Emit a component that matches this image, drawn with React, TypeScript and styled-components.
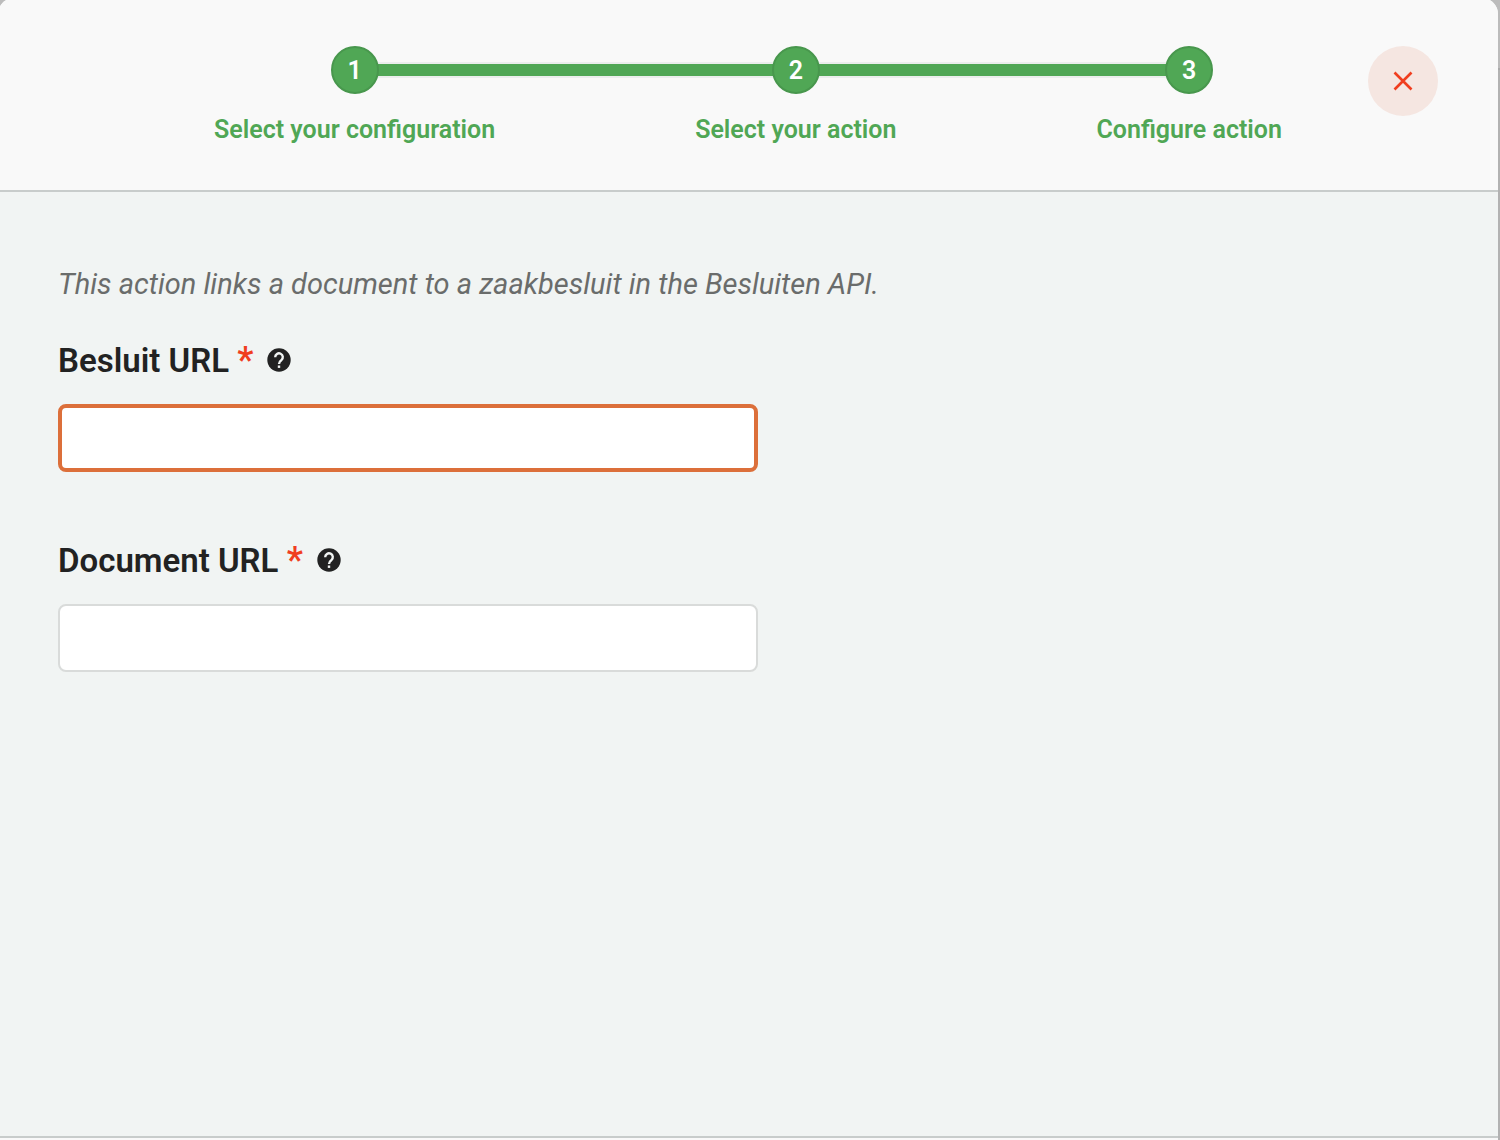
import React from "react";
import styled, { createGlobalStyle } from "styled-components";

const GlobalStyle = createGlobalStyle`
  *, *::before, *::after { box-sizing: border-box; }
  body {
    margin: 0;
    font-family: Roboto, "Liberation Sans", sans-serif;
    color: #222;
  }
`;

const Backdrop = styled.div`
  min-height: 100vh;
  display: flex;
  overflow: hidden;
  padding-right: 2px;
  background: linear-gradient(#bcbcbc 68px, #a9a9a9 68px, #a9a9a9 70px, #b2b2b2 70px);
`;

const Dialog = styled.section`
  flex: 1;
  display: flex;
  flex-direction: column;
  margin: -2px 0 0 -2px;
  border-radius: 16px 16px 0 0;
  overflow: hidden;
  background: #f1f4f3;
`;

const Header = styled.header`
  display: grid;
  padding: 48px 60px 44px;
  background: #f9f9f9;
  border-bottom: 2px solid #c8cccb;
`;

const Steps = styled.ol`
  grid-area: 1 / 1;
  justify-self: center;
  display: flex;
  margin: 0;
  padding: 0;
  list-style: none;
`;

const Step = styled.li`
  display: flex;
  flex-direction: column;
  gap: 20px;
`;

const Track = styled.div`
  display: flex;
  align-items: center;
`;

const Line = styled.span<{ $hidden?: boolean }>`
  flex: 1;
  height: 16px;
  border: solid #ebeeed;
  border-width: 2px 0;
  background: #50a755;
  visibility: ${(p) => (p.$hidden ? "hidden" : "visible")};
`;

const Circle = styled.span`
  display: flex;
  align-items: center;
  justify-content: center;
  width: 48px;
  height: 48px;
  margin: 0 -1px;
  padding-top: 1px;
  border: 2px solid #48974d;
  border-radius: 50%;
  background: #50a755;
  color: #fff;
  font-size: 25px;
  font-weight: 600;
  z-index: 1;
`;

const StepLabel = styled.span`
  padding: 0 100px;
  color: #50a755;
  font-size: 25px;
  line-height: 32px;
  font-weight: 600;
  white-space: nowrap;
`;

const CloseButton = styled.button`
  grid-area: 1 / 1;
  justify-self: end;
  display: grid;
  place-items: center;
  width: 70px;
  height: 70px;
  padding: 0;
  border: 0;
  border-radius: 50%;
  background: #f5e6e1;
  color: #f03e1f;
  z-index: 2;
  cursor: pointer;
`;

const Body = styled.form`
  flex: 1;
  padding: 74px 60px;
`;

const Intro = styled.p`
  margin: 0 0 40px;
  color: #6a6c6b;
  font-size: 29px;
  line-height: 36px;
  font-style: italic;
`;

const Field = styled.div`
  display: flex;
  flex-direction: column;
  gap: 26px;
  max-width: 700px;
  margin-bottom: 70px;
`;

const FieldHead = styled.div`
  display: flex;
  align-items: center;
  gap: 14px;
  height: 36px;
`;

const Label = styled.label`
  font-size: 33px;
  line-height: 36px;
  font-weight: 600;
`;

const Required = styled.span`
  color: #f03e1f;
  font-size: 36px;
  line-height: 36px;
`;

const HelpButton = styled.button`
  display: grid;
  padding: 0;
  border: 0;
  background: none;
  color: #222;
`;

const TextBox = styled.input`
  width: 100%;
  height: 68px;
  padding: 0 20px;
  border: 2px solid #d9dbda;
  border-radius: 8px;
  background: #fff;
  font: inherit;
  font-size: 29px;
  outline: none;

  &:focus {
    border: 4px solid #dc6f3a;
  }
`;

const Footer = styled.footer`
  height: 4px;
  border-top: 2px solid #c8cccb;
  background: #f9f9f9;
`;

const HelpIcon = () => (
  <svg width="24" height="24" viewBox="0 0 24 24" aria-hidden="true">
    <circle cx="12" cy="12" r="11.7" fill="currentColor" />
    <path d="M8.2 9.2a3.8 3.8 0 1 1 6.2 2.9c-1.5 1.1-2.4 1.7-2.4 3.9" fill="none" stroke="#f1f4f3" strokeWidth="2.4" />
    <rect x="10.8" y="17.5" width="2.4" height="2.4" fill="#f1f4f3" />
  </svg>
);

const CloseIcon = () => (
  <svg width="20" height="20" viewBox="0 0 20 20" aria-hidden="true">
    <path d="M1.5 1.5l17 17M18.5 1.5l-17 17" stroke="currentColor" strokeWidth="2.6" />
  </svg>
);

const steps = ["Select your configuration", "Select your action", "Configure action"];

const fields = [
  { id: "besluit-url", label: "Besluit URL" },
  { id: "document-url", label: "Document URL" },
];

export default function App() {
  return (
    <>
      <GlobalStyle />
      <Backdrop>
        <Dialog role="dialog" aria-label="Configure action">
          <Header>
            <Steps>
              {steps.map((label, i) => (
                <Step key={label}>
                  <Track>
                    <Line $hidden={i === 0} />
                    <Circle>{i + 1}</Circle>
                    <Line $hidden={i === steps.length - 1} />
                  </Track>
                  <StepLabel>{label}</StepLabel>
                </Step>
              ))}
            </Steps>
            <CloseButton type="button" aria-label="Close">
              <CloseIcon />
            </CloseButton>
          </Header>
          <Body>
            <Intro>This action links a document to a zaakbesluit in the Besluiten API.</Intro>
            {fields.map((field, i) => (
              <Field key={field.id}>
                <FieldHead>
                  <Label htmlFor={field.id}>
                    {field.label} <Required>*</Required>
                  </Label>
                  <HelpButton type="button" aria-label={`Help for ${field.label}`}>
                    <HelpIcon />
                  </HelpButton>
                </FieldHead>
                <TextBox id={field.id} type="text" required autoFocus={i === 0} />
              </Field>
            ))}
          </Body>
          <Footer />
        </Dialog>
      </Backdrop>
    </>
  );
}
